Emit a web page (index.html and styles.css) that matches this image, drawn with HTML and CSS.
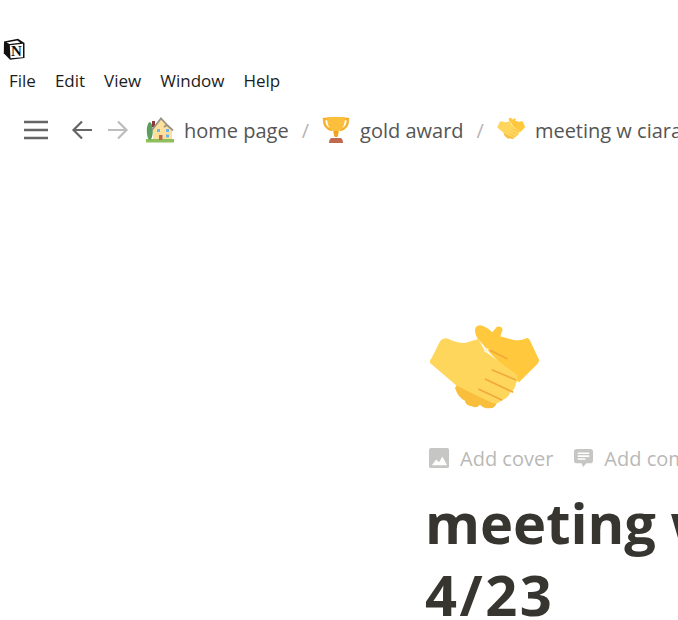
FILE: index.html
```html
<!DOCTYPE html>
<html lang="en">
<head>
    <meta charset="UTF-8">
    <title>meeting w ciara 4/23</title>
    <link rel="stylesheet" href="styles.css">
</head>
<body>
<svg class="defs" width="0" height="0">
    <symbol id="handshake" viewBox="42 25 330 330">
        <path fill="#FFC83D" d="M180 60Q182 47 197 47 215 52 232 68L245 52Q258 46 263 60L256 80 300 92Q325 92 335 85 342 85 346 95L372 150Q373 158 365 165L312 218 225 130 195 95Q180 80 180 60Z"/>
        <path fill="#F9BE3C" d="M120 235L125 226 245 280Q240 297 222 296 205 296 195 285 185 297 170 290 150 285 150 273 130 265 120 235Z"/>
        <path fill="#FFD65C" d="M45 160Q43 152 50 145L75 95Q85 82 100 87 125 100 150 100L190 88 210 125 305 195Q312 210 302 222 300 240 285 250 280 265 260 272 250 285 232 280L125 228Z"/>
        <path fill="none" stroke="#F2A93B" stroke-width="5" d="M225 122 278 148M230 180 303 211M210 208 295 248M190 238 262 272"/>
        <path fill="#FFF3D0" d="M208 116h12v12h-12z"/>
    </symbol>
</svg>

<div class="title-bar">
    <svg class="notion-logo" viewBox="0 0 22 22">
        <path fill="#111" d="M1 3.500 15 .8 21.500 5v15L7 21.800.8 15.200z"/>
        <path fill="#fff" d="M6.800 7.300 20 5.800v13.400L7.500 20.300zM3.500 4.500l10.800-2 3 2.200L6.500 6z"/>
        <text x="13.500" y="17.600" class="notion-n">N</text>
    </svg>
</div>

<nav class="menu-bar">
    <span>File</span>
    <span>Edit</span>
    <span>View</span>
    <span>Window</span>
    <span>Help</span>
</nav>

<div class="top-bar">
    <svg class="menu-icon" viewBox="0 0 24 20">
        <path fill="none" stroke="#666" stroke-width="2.600" d="M0 2h24M0 10h24M0 18h24"/>
    </svg>
    <svg class="arrow" viewBox="0 0 22 20">
        <path fill="none" stroke="#666" stroke-width="2.200" d="M21 10H2.500M11 1.500 2.500 10l8.500 8.500"/>
    </svg>
    <svg class="arrow arrow-next" viewBox="0 0 22 20">
        <path fill="none" stroke="#bdbdbd" stroke-width="2.200" d="M1 10h18.500M11 1.500l8.500 8.500-8.500 8.500"/>
    </svg>
    <div class="crumbs">
        <svg class="crumb-icon" viewBox="0 0 28 28">
            <path fill="#8FBF5A" d="M0 23h28v3.500H0z"/>
            <ellipse cx="3.800" cy="15" rx="3" ry="9" fill="#5C9E5E"/>
            <path fill="#8A3A3A" d="M6 5h3v6H6z"/>
            <path fill="#FFE09A" d="M7 13 15 3l6 6 5 4v10H7z"/>
            <path fill="none" stroke="#99938A" stroke-width="1.800" d="M6 14 15 2.500l7 7.500M18 11l3-2 6 5.500"/>
            <path fill="#6DB4E8" d="M11 13h3v3h-3zM20 13h3v3h-3zM20 18.500h3v3h-3z"/>
            <path fill="#C1694F" d="M13 19h3.500v5H13z"/>
        </svg>
        <span class="crumb-text">home page</span>
        <span class="crumb-sep">/</span>
        <svg class="crumb-icon" viewBox="0 0 28 28">
            <path fill="none" stroke="#F7B02C" stroke-width="2.400" d="M6 3H2c0 6 2 10 8 11M22 3h4c0 6-2 10-8 11"/>
            <path fill="#FBBF3C" d="M5 1h18c0 7-2 12-6 14l-1 5h-4l-1-5C7 13 5 8 5 1z"/>
            <path fill="#F59E1F" d="M12 15h4l-.6 6h-2.800z"/>
            <path fill="#C1694F" d="M10 22h8c2 0 3 2 3 5H7c0-3 1-5 3-5z"/>
        </svg>
        <span class="crumb-text">gold award</span>
        <span class="crumb-sep">/</span>
        <svg class="crumb-icon"><use href="#handshake"/></svg>
        <span class="crumb-text">meeting w ciara 4/23</span>
    </div>
</div>

<main class="page">
    <svg class="page-icon"><use href="#handshake"/></svg>
    <div class="page-actions">
        <span class="page-action">
            <svg class="action-icon" viewBox="0 0 22 22">
                <rect width="21" height="21" rx="2" fill="#c6c6c4"/>
                <path fill="#fff" d="M3 18l4.500-6 3 3 3.500-6 5 9z"/>
            </svg>
            Add cover
        </span>
        <span class="page-action">
            <svg class="action-icon" viewBox="0 0 22 22">
                <path fill="#c6c6c4" d="M4 1h14c2 0 3 1 3 3v9c0 2-1 3-3 3h-4l-3.500 4-1.500-4H4c-2 0-3-1-3-3V4c0-2 1-3 3-3z"/>
                <path fill="none" stroke="#fff" stroke-width="1.600" d="M5 5.500h12M5 8.500h12M5 11.500h8"/>
            </svg>
            Add comment
        </span>
    </div>
    <h1 class="page-title">meeting w ciara<br><span class="title-date">4/23</span></h1>
</main>
</body>
</html>
```

FILE: styles.css
```css
html, body {
    height: 100%;
}

body {
    margin: 0;
    background: #fff;
    font-family: "Open Sans", "Noto Sans", sans-serif;
    overflow: hidden;
    white-space: nowrap;
}

.defs {
    display: block;
    height: 0;
}

.title-bar {
    height: 60px;
    padding: 38px 0 0 3px;
    box-sizing: border-box;
}

.notion-logo {
    display: block;
    width: 22px;
    height: 22px;
}

.notion-n {
    font-family: "Liberation Serif", serif;
    font-size: 15px;
    font-weight: 700;
    text-anchor: middle;
    fill: #111;
}

.menu-bar {
    display: flex;
    gap: 19px;
    height: 42px;
    padding-left: 9px;
    font-size: 17px;
    line-height: 42px;
    color: #1c1c1c;
}

.top-bar {
    display: flex;
    align-items: center;
    height: 56px;
    padding-left: 24px;
    color: #555;
}

.top-bar svg {
    flex: none;
}

.menu-icon {
    width: 24px;
    height: 20px;
    margin-right: 23px;
}

.arrow {
    width: 22px;
    height: 20px;
    margin-right: 14px;
}

.arrow-next {
    margin-right: 17px;
}

.crumbs {
    display: flex;
    flex: none;
    align-items: center;
    font-size: 20px;
}

.crumb-icon {
    width: 28px;
    height: 28px;
    margin-right: 10px;
}

.crumb-sep {
    margin: 0 13px;
    color: #b5b5b5;
}

.page {
    padding: 160px 0 0 425px;
}

.page-icon {
    display: block;
    width: 110px;
    height: 110px;
    margin-left: 4px;
}

.page-actions {
    display: flex;
    gap: 20px;
    margin-top: 14px;
    height: 32px;
    align-items: center;
    padding-left: 4px;
    font-size: 20px;
    color: #b9b9b7;
}

.page-action {
    display: flex;
    align-items: center;
    gap: 10px;
}

.action-icon {
    width: 21px;
    height: 21px;
}

.page-title {
    margin: 12px 0 0;
    font-size: 56px;
    line-height: 72px;
    font-weight: 700;
    color: #37352f;
}

.title-date {
    letter-spacing: 2.500px;
}
```
